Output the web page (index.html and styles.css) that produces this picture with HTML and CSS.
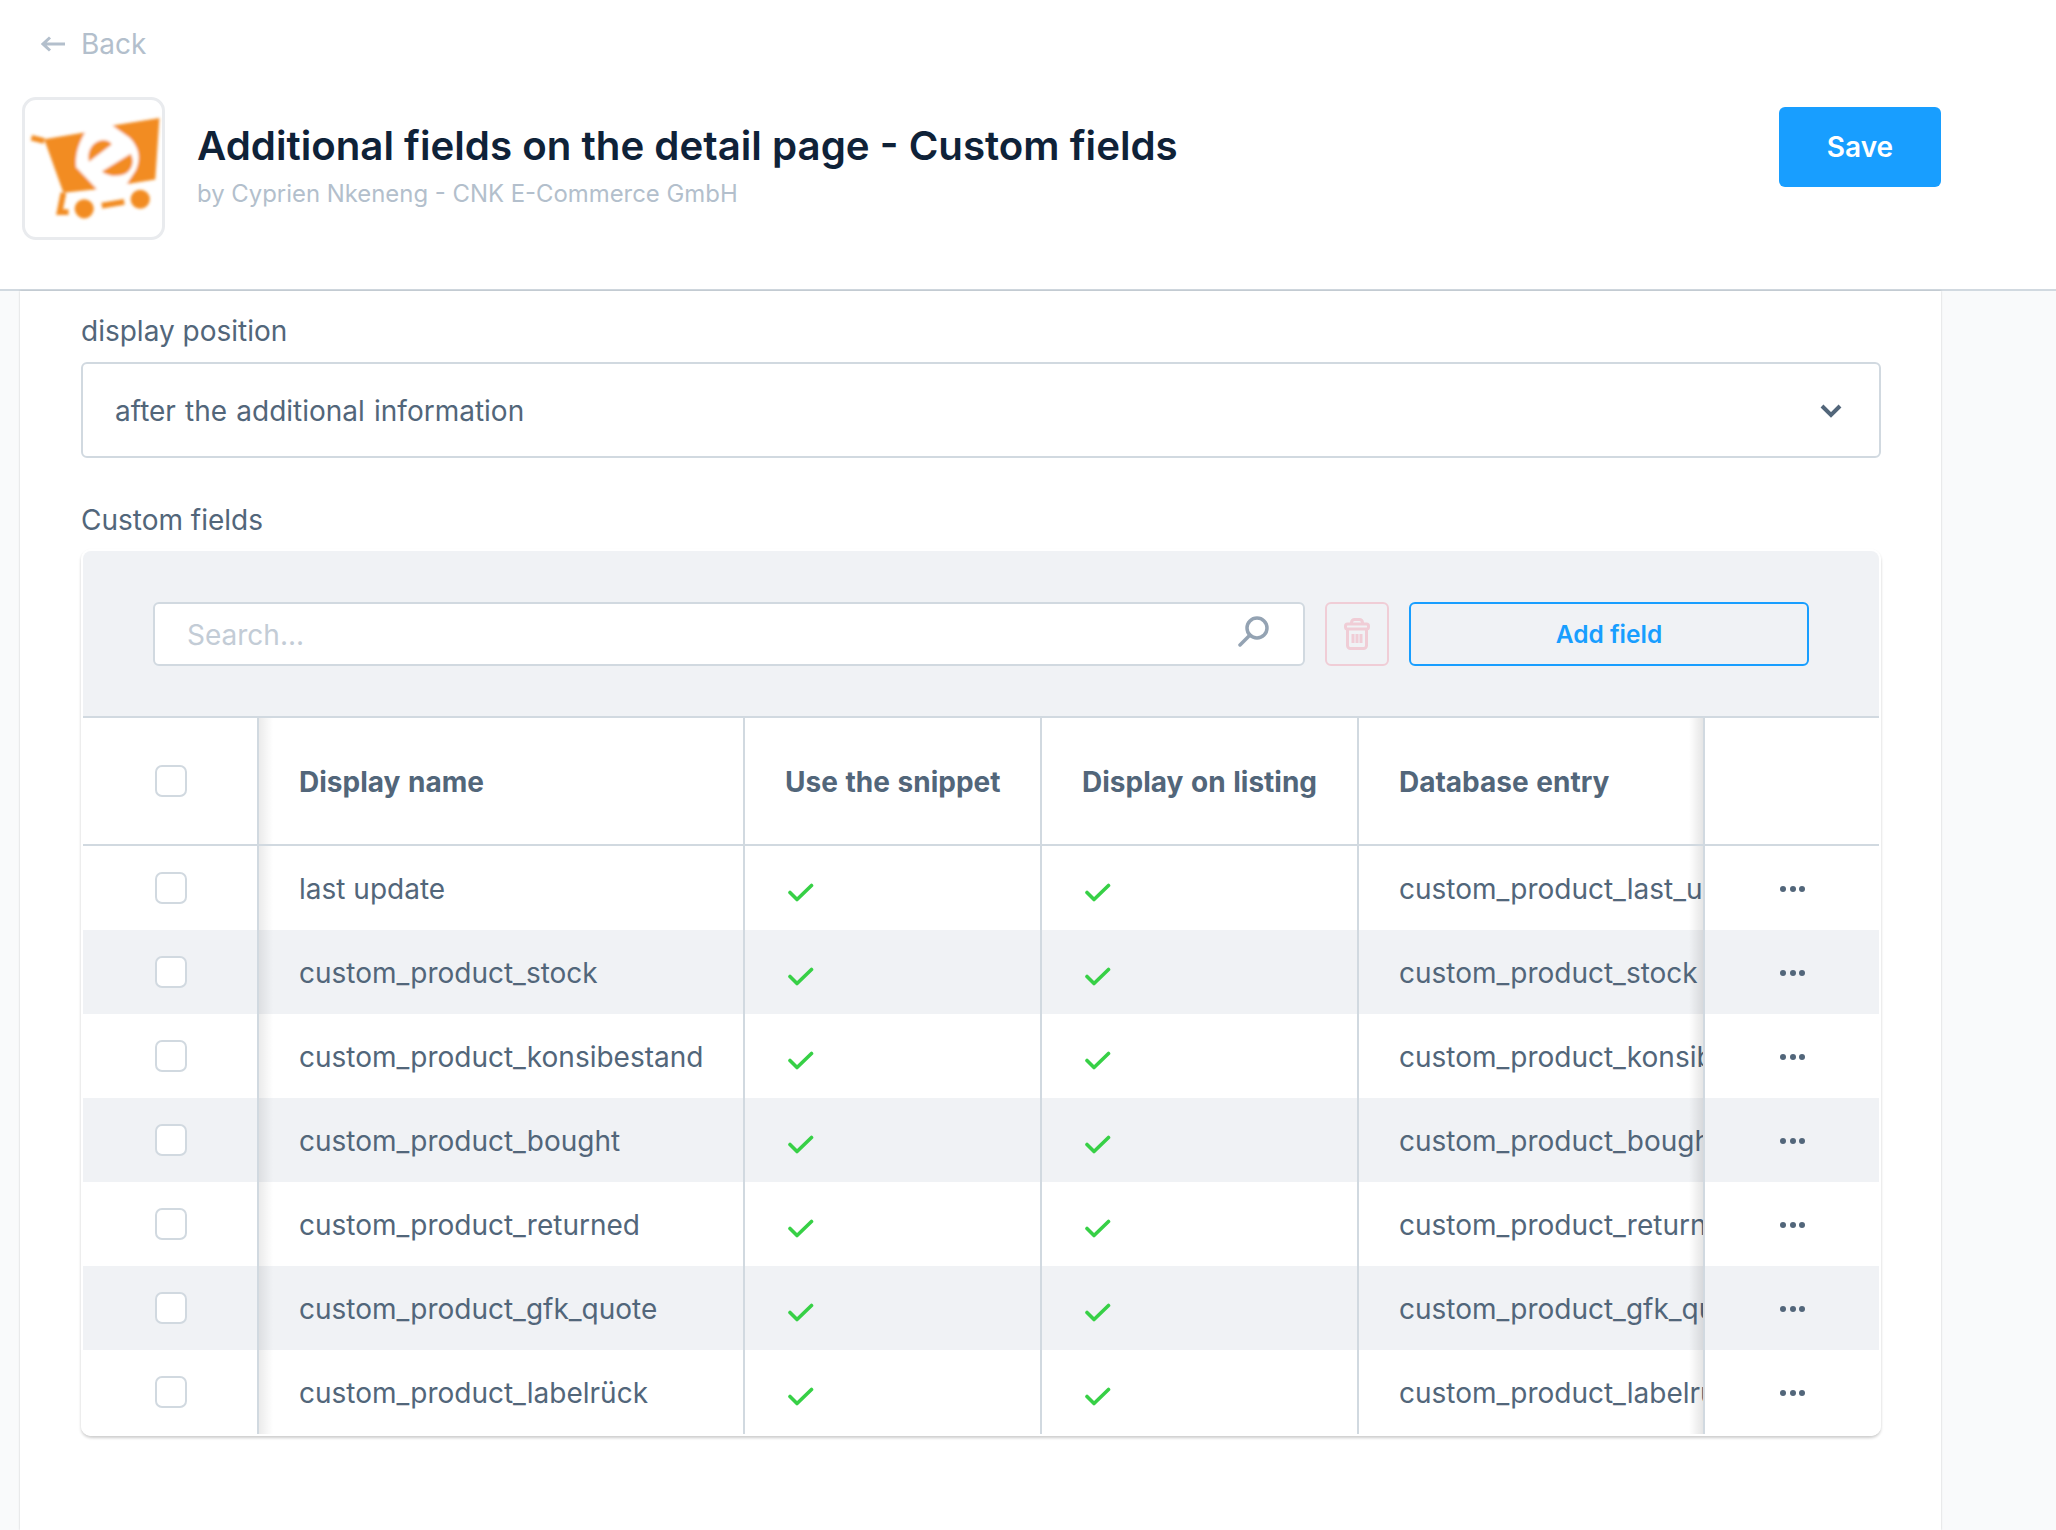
FILE: index.html
```html
<!DOCTYPE html>
<html lang="en">
<head>
    <meta charset="UTF-8">
    <title>Additional fields on the detail page - Custom fields</title>
    <link rel="stylesheet" href="styles.css">
</head>
<body>
    <header class="page-head">
        <a class="back-link">
            <svg class="back-arrow" viewBox="0 0 24 16"><path d="M9 1.5 2 8l7 6.5M2 8h22"/></svg>
            <span>Back</span>
        </a>
        <div class="head-row">
            <div class="app-logo">
                <svg viewBox="5 22 428 428">
                    <defs><filter id="soft"><feGaussianBlur stdDeviation="4.5"/></filter></defs>
                    <g filter="url(#soft)">
                        <path class="logo-fill" d="M65 145 200 122 270 103 425 78 412 270 320 285 235 300 125 312Z"/>
                        <path class="logo-white" d="M200 112 272 98 332 140C360 170 368 200 352 240L318 292 235 306 165 232C160 190 175 150 200 112Z"/>
                        <path class="logo-fill" d="M205 215C196 180 220 148 250 148c14 0 22 6 26 13Z"/>
                        <path class="logo-fill" d="M245 245 335 190c14 24 4 50-15 62-25 12-55 8-75-7Z"/>
                        <path class="logo-line" d="M25 140l40 10"/>
                        <path class="logo-line" d="M125 312l-12 60h28"/>
                        <path class="logo-line" d="M245 352l70-12"/>
                        <circle class="logo-fill" cx="190" cy="362" r="30"/>
                        <circle class="logo-fill" cx="365" cy="332" r="30"/>
                    </g>
                </svg>
            </div>
            <div class="app-title">
                <h1>Additional fields on the detail page - Custom fields</h1>
                <p>by Cyprien Nkeneng - CNK E-Commerce GmbH</p>
            </div>
            <button class="save-btn">Save</button>
        </div>
    </header>

    <main class="panel">
        <label class="field-label">display position</label>
        <div class="select-box">
            <span>after the additional information</span>
            <svg class="select-arrow" viewBox="0 0 22 14"><path d="M2 2l9 9 9-9"/></svg>
        </div>

        <label class="field-label fields-label">Custom fields</label>
        <div class="grid-card">
            <div class="toolbar">
                <div class="search-box">
                    <span>Search...</span>
                    <svg class="search-icon" viewBox="0 0 32 32"><circle cx="19" cy="12" r="10"/><path d="M12 19 2 29"/></svg>
                </div>
                <button class="trash-btn">
                    <svg viewBox="0 0 26 32"><rect x="1.5" y="6" width="23" height="5" rx="2"/><path d="M7.5 6V4.5a3 3 0 0 1 3-3h5a3 3 0 0 1 3 3V6M3.5 11v16.5a3 3 0 0 0 3 3h13a3 3 0 0 0 3-3V11M9 16v9M13 16v9M17 16v9"/></svg>
                </button>
                <button class="add-btn">Add field</button>
            </div>
            <table class="data-grid">
                <colgroup>
                    <col class="col-check"><col class="col-name"><col class="col-snippet">
                    <col class="col-listing"><col class="col-db"><col class="col-actions">
                </colgroup>
                <thead>
                    <tr>
                        <th class="cell-check"><span class="checkbox"></span></th>
                        <th>Display name</th>
                        <th>Use the snippet</th>
                        <th>Display on listing</th>
                        <th class="cell-db">Database entry</th>
                        <th class="cell-actions"></th>
                    </tr>
                </thead>
                <tbody>
                    <tr>
                        <td class="cell-check"><span class="checkbox"></span></td>
                        <td>last update</td>
                        <td><svg class="check" viewBox="0 0 28 19"><path d="M3 9.5 10 16.5 24.5 2.5"/></svg></td>
                        <td><svg class="check" viewBox="0 0 28 19"><path d="M3 9.5 10 16.5 24.5 2.5"/></svg></td>
                        <td class="cell-db">custom_product_last_update</td>
                        <td class="cell-actions"><span class="dots"><i></i><i></i><i></i></span></td>
                    </tr>
                    <tr>
                        <td class="cell-check"><span class="checkbox"></span></td>
                        <td>custom_product_stock</td>
                        <td><svg class="check" viewBox="0 0 28 19"><path d="M3 9.5 10 16.5 24.5 2.5"/></svg></td>
                        <td><svg class="check" viewBox="0 0 28 19"><path d="M3 9.5 10 16.5 24.5 2.5"/></svg></td>
                        <td class="cell-db">custom_product_stock</td>
                        <td class="cell-actions"><span class="dots"><i></i><i></i><i></i></span></td>
                    </tr>
                    <tr>
                        <td class="cell-check"><span class="checkbox"></span></td>
                        <td>custom_product_konsibestand</td>
                        <td><svg class="check" viewBox="0 0 28 19"><path d="M3 9.5 10 16.5 24.5 2.5"/></svg></td>
                        <td><svg class="check" viewBox="0 0 28 19"><path d="M3 9.5 10 16.5 24.5 2.5"/></svg></td>
                        <td class="cell-db">custom_product_konsibestand</td>
                        <td class="cell-actions"><span class="dots"><i></i><i></i><i></i></span></td>
                    </tr>
                    <tr>
                        <td class="cell-check"><span class="checkbox"></span></td>
                        <td>custom_product_bought</td>
                        <td><svg class="check" viewBox="0 0 28 19"><path d="M3 9.5 10 16.5 24.5 2.5"/></svg></td>
                        <td><svg class="check" viewBox="0 0 28 19"><path d="M3 9.5 10 16.5 24.5 2.5"/></svg></td>
                        <td class="cell-db">custom_product_bought</td>
                        <td class="cell-actions"><span class="dots"><i></i><i></i><i></i></span></td>
                    </tr>
                    <tr>
                        <td class="cell-check"><span class="checkbox"></span></td>
                        <td>custom_product_returned</td>
                        <td><svg class="check" viewBox="0 0 28 19"><path d="M3 9.5 10 16.5 24.5 2.5"/></svg></td>
                        <td><svg class="check" viewBox="0 0 28 19"><path d="M3 9.5 10 16.5 24.5 2.5"/></svg></td>
                        <td class="cell-db">custom_product_returned</td>
                        <td class="cell-actions"><span class="dots"><i></i><i></i><i></i></span></td>
                    </tr>
                    <tr>
                        <td class="cell-check"><span class="checkbox"></span></td>
                        <td>custom_product_gfk_quote</td>
                        <td><svg class="check" viewBox="0 0 28 19"><path d="M3 9.5 10 16.5 24.5 2.5"/></svg></td>
                        <td><svg class="check" viewBox="0 0 28 19"><path d="M3 9.5 10 16.5 24.5 2.5"/></svg></td>
                        <td class="cell-db">custom_product_gfk_quote</td>
                        <td class="cell-actions"><span class="dots"><i></i><i></i><i></i></span></td>
                    </tr>
                    <tr>
                        <td class="cell-check"><span class="checkbox"></span></td>
                        <td>custom_product_labelrück</td>
                        <td><svg class="check" viewBox="0 0 28 19"><path d="M3 9.5 10 16.5 24.5 2.5"/></svg></td>
                        <td><svg class="check" viewBox="0 0 28 19"><path d="M3 9.5 10 16.5 24.5 2.5"/></svg></td>
                        <td class="cell-db">custom_product_labelrück</td>
                        <td class="cell-actions"><span class="dots"><i></i><i></i><i></i></span></td>
                    </tr>
                </tbody>
            </table>
        </div>
    </main>
</body>
</html>
```

FILE: styles.css
```css
* {
    box-sizing: border-box;
}
html, body {
    height: 100%;
}
body {
    margin: 0;
    background-color: #f9fafb;
    color: #52667a;
    font-family: Inter, "Liberation Sans", sans-serif;
    font-size: 28px;
    overflow: hidden;
}
button {
    font-family: inherit;
    cursor: pointer;
}

/* Page header */
.page-head {
    height: 291px;
    padding: 26px 115px 0 22px;
    background-color: #fff;
    border-bottom: 2px solid #d1d9e0;
}
.back-link {
    display: flex;
    align-items: center;
    gap: 16px;
    height: 36px;
    padding-left: 19px;
    color: #b3bfcc;
}
.back-arrow {
    width: 24px;
    height: 16px;
    fill: none;
    stroke: #b3bfcc;
    stroke-width: 3;
}
.head-row {
    display: flex;
    align-items: flex-start;
    margin-top: 35px;
}
.app-logo {
    width: 143px;
    height: 143px;
    flex-shrink: 0;
    border: 3px solid #e9ebee;
    border-radius: 14px;
    overflow: hidden;
}
.app-logo svg {
    display: block;
    width: 100%;
    height: 100%;
}
.logo-fill {
    fill: #f28c24;
}
.logo-white {
    fill: #fff;
}
.logo-line {
    fill: none;
    stroke: #f28c24;
    stroke-width: 18;
}
.app-title {
    flex: 1;
    margin: 24px 0 0 32px;
}
.app-title h1 {
    margin: 0;
    color: #0f2238;
    font-size: 40.25px;
    font-weight: 600;
    line-height: 50px;
}
.app-title p {
    margin: 7px 0 0;
    color: #b3bfcc;
    font-size: 23.9px;
    line-height: 32px;
}
.save-btn {
    width: 162px;
    height: 80px;
    margin-top: 10px;
    background-color: #189eff;
    border: 0;
    border-radius: 6px;
    color: #fff;
    font-size: 28px;
    font-weight: 600;
}

/* Settings panel */
.panel {
    width: 1921px;
    height: 1239px;
    margin-left: 20px;
    padding: 22px 60px 0 61px;
    background-color: #fff;
    box-shadow: 0 0 2px rgba(0, 0, 0, .2);
}
.field-label {
    display: block;
    line-height: 36px;
}
.fields-label {
    margin-top: 44px;
}
.select-box {
    display: flex;
    align-items: center;
    justify-content: space-between;
    height: 96px;
    margin-top: 13px;
    padding: 2px 37px 0 32px;
    border: 2px solid #d1d9e0;
    border-radius: 6px;
    word-spacing: 1.3px;
}
.select-arrow {
    width: 22px;
    height: 14px;
    fill: none;
    stroke: #52667a;
    stroke-width: 4;
}

/* Grid card */
.grid-card {
    margin-top: 11px;
    border: 2px solid #fff;
    border-radius: 10px;
    box-shadow: 0 2px 3px rgba(0, 0, 0, .2);
    overflow: hidden;
}
.toolbar {
    display: flex;
    gap: 20px;
    height: 167px;
    padding: 51px 70px 0;
    background-color: #f0f2f5;
    border-bottom: 2px solid #d1d9e0;
}
.search-box {
    display: flex;
    align-items: center;
    justify-content: space-between;
    width: 1152px;
    height: 64px;
    padding: 2px 33px 0 32px;
    background-color: #fff;
    border: 2px solid #d1d9e0;
    border-radius: 6px;
    color: #c3ccd6;
}
.search-icon {
    width: 32px;
    height: 32px;
    margin-top: -6px;
    fill: none;
    stroke: #94a3b3;
    stroke-width: 3.5;
    stroke-linecap: round;
}
.trash-btn {
    display: flex;
    align-items: center;
    justify-content: center;
    width: 64px;
    height: 64px;
    padding: 0;
    background-color: transparent;
    border: 2px solid #f0cdd6;
    border-radius: 6px;
}
.trash-btn svg {
    width: 26px;
    height: 32px;
    fill: none;
    stroke: #f0cdd6;
    stroke-width: 3;
}
.add-btn {
    width: 400px;
    height: 64px;
    background-color: transparent;
    border: 2px solid #189eff;
    border-radius: 6px;
    color: #189eff;
    font-size: 24.5px;
    font-weight: 600;
}

/* Table */
.data-grid {
    width: 100%;
    table-layout: fixed;
    border-spacing: 0;
}
.col-check { width: 176px; }
.col-name { width: 486px; }
.col-snippet { width: 297px; }
.col-listing { width: 317px; }
.col-db { width: 346px; }
.col-actions { width: 174px; }

.data-grid th,
.data-grid td {
    position: relative;
    padding: 2px 0 0 40px;
    border-right: 2px solid #d1d9e0;
    overflow: hidden;
    text-align: left;
    white-space: nowrap;
}
.data-grid th {
    height: 128px;
    border-bottom: 2px solid #d1d9e0;
    font-weight: 700;
    word-spacing: 1px;
}
.data-grid td {
    height: 84px;
}
.data-grid tbody tr:nth-child(even) td {
    background-color: #f0f2f5;
}
.data-grid .cell-check {
    padding: 0 0 0 72px;
}
.data-grid .cell-actions {
    padding: 2px 0 0 75px;
    border-right: 0;
}

/* sticky column shadows */
.cell-db::after,
.cell-check + th::after,
.cell-check + td::after {
    content: "";
    position: absolute;
    top: 0;
    bottom: 0;
    width: 14px;
}
.cell-check + th::after,
.cell-check + td::after {
    left: 0;
    background: linear-gradient(to right, rgba(0, 0, 0, .08), rgba(0, 0, 0, 0));
}
.cell-db::after {
    right: 0;
    background: linear-gradient(to left, rgba(0, 0, 0, .1), rgba(255, 255, 255, 0));
}

.checkbox {
    display: block;
    width: 32px;
    height: 32px;
    background-color: #fff;
    border: 2px solid #d1d9e0;
    border-radius: 7px;
}
.check {
    display: block;
    width: 28px;
    height: 19px;
    margin: 6px 0 0 2px;
    fill: none;
    stroke: #37d046;
    stroke-width: 3.6;
    stroke-linecap: round;
    stroke-linejoin: round;
}
.dots {
    display: flex;
    gap: 3.5px;
}
.dots i {
    width: 6px;
    height: 6px;
    background-color: #52667a;
    border-radius: 50%;
}
```
